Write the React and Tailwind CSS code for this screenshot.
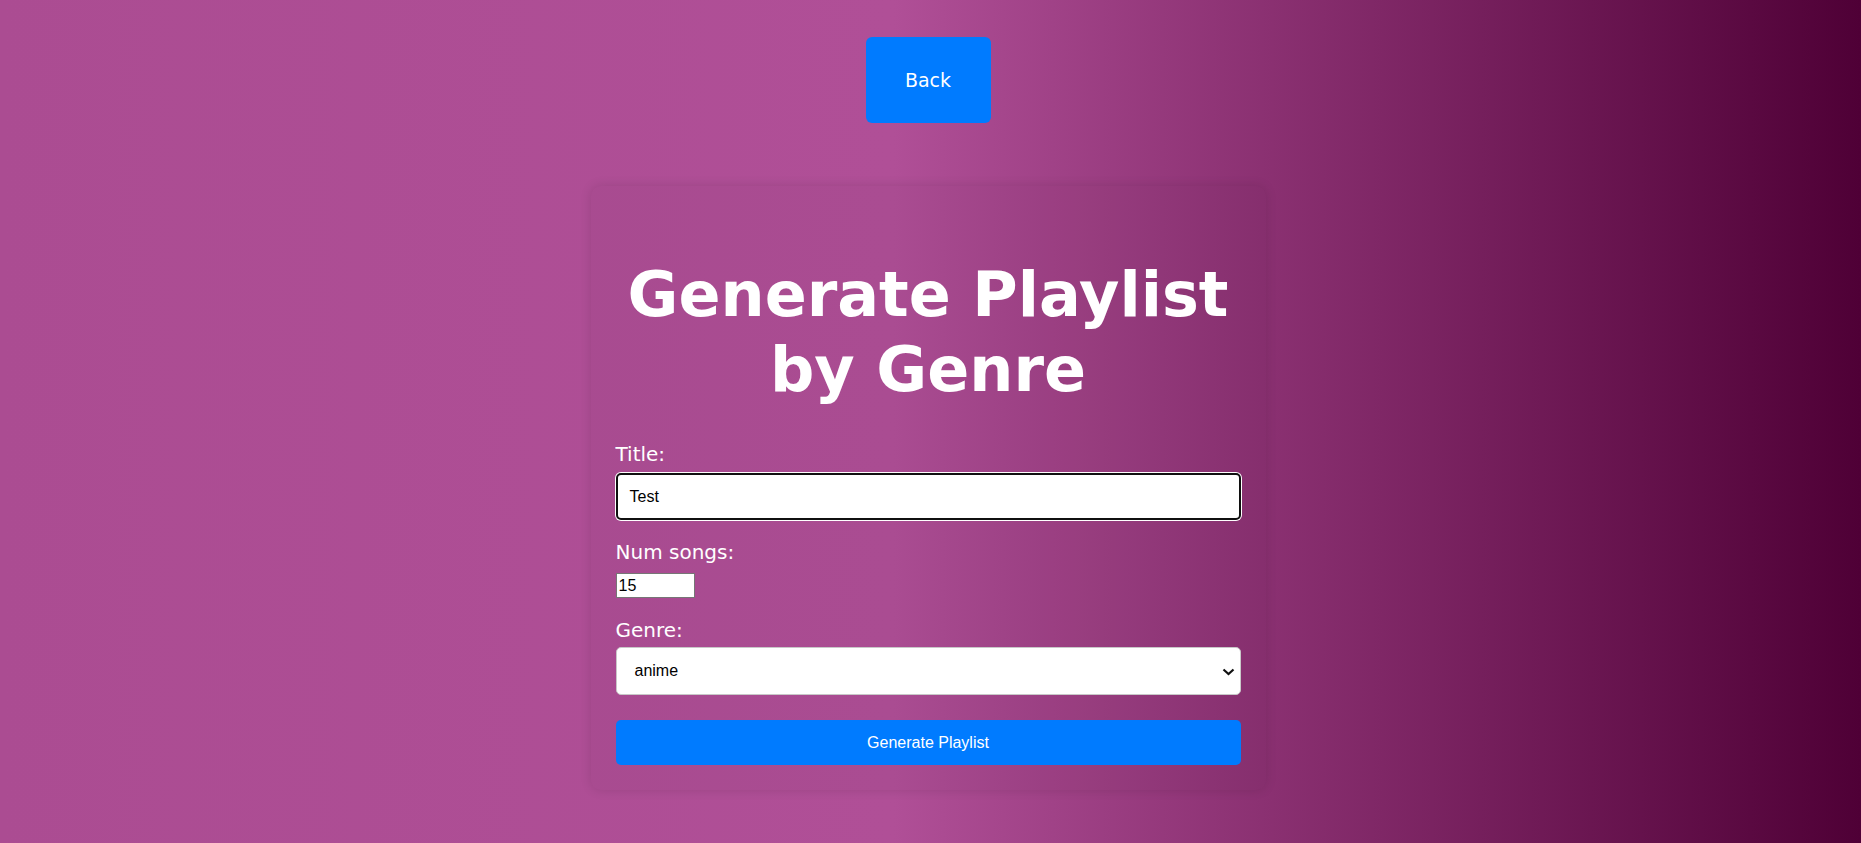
import React from "react";

const dv = "font-['DejaVu_Sans',Verdana,sans-serif]";
const ar = "font-['Liberation_Sans',Arial,sans-serif]";

export default function App() {
  return (
    <div className="h-screen w-full overflow-hidden bg-[linear-gradient(to_right,#ab4c92_0%,#b04f97_48%,#4f0036_100%)] flex flex-col items-center pt-[37px] pr-[5px]">
      <button
        className={`${dv} w-[125px] h-[86px] rounded-[6px] bg-[#007bff] text-white text-[19px] flex items-center justify-center`}
      >
        Back
      </button>

      <div className="mt-[63px] w-[675px] rounded-[10px] bg-black/[0.03] shadow-[0_0_12px_rgba(0,0,0,0.12)] px-[25px] pt-[71px] pb-[25px] flex flex-col">
        <h1 className={`${dv} text-white font-bold text-[62px] leading-[75px] text-center`}>
          Generate Playlist
          <br />
          by Genre
        </h1>

        <label className={`${dv} mt-[36px] text-white text-[20px] leading-[23px]`}>
          Title:
        </label>
        <div className="mt-[7px] h-[47px] rounded-[5px] border-2 border-[#101010] ring-1 ring-white bg-white flex items-center px-[12px]">
          <span className={`${ar} text-black text-[16px]`}>Test</span>
        </div>

        <label className={`${dv} mt-[21px] text-white text-[20px] leading-[23px]`}>
          Num songs:
        </label>
        <div className="mt-[9px] w-[79px] h-[25px] border border-[#767676] bg-white flex items-center px-[2px]">
          <span className={`${ar} text-black text-[16px]`}>15</span>
        </div>

        <label className={`${dv} mt-[21px] text-white text-[20px] leading-[23px]`}>
          Genre:
        </label>
        <div className="mt-[5px] h-[48px] rounded-[5px] border border-[#c8c8c8] bg-white flex items-center justify-between pl-[18px] pr-[5px]">
          <span className={`${ar} text-black text-[16px]`}>anime</span>
          <svg width="13" height="8" viewBox="0 0 13 8" className="mt-[1px]">
            <path d="M1.5 1.5 L6.5 6 L11.5 1.5" fill="none" stroke="#111" strokeWidth="2.2" />
          </svg>
        </div>

        <button
          className={`${ar} mt-[25px] h-[45px] rounded-[5px] bg-[#007bff] text-white text-[16px] flex items-center justify-center`}
        >
          Generate Playlist
        </button>
      </div>
    </div>
  );
}
